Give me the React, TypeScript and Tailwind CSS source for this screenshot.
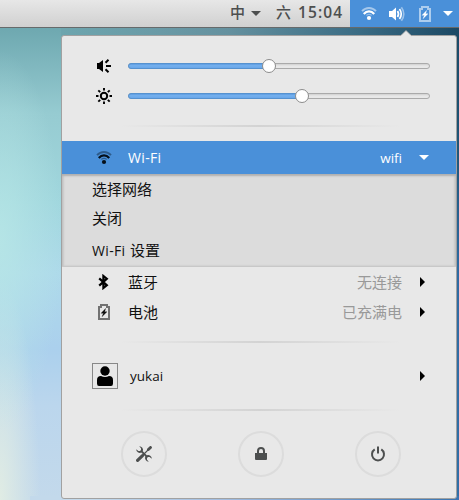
import React from "react";

const CJK = "font-['Open_Sans','Noto_Sans_CJK_SC',sans-serif]";

function WifiIcon({ dim = 0.4 }: { dim?: number }) {
  return (
    <svg width="16" height="16" viewBox="0 0 16 16" fill="none" stroke="currentColor" className="shrink-0">
      <path d="M1 5.2C4.8.9 11.2.9 15 5.2" strokeWidth="1.8" opacity={dim} />
      <path d="M2.8 8C5.8 4.4 10.2 4.4 13.2 8" strokeWidth="2.2" />
      <circle cx="8" cy="12" r="2.1" fill="currentColor" stroke="none" />
      <path d="M5.2 9.4C7 8 9 8 10.8 9.4" strokeWidth="1.2" opacity="0.4" />
    </svg>
  );
}

function BatteryIcon({ dim = 0.55 }: { dim?: number }) {
  return (
    <svg width="16" height="16" viewBox="0 0 16 16" fill="none" className="shrink-0">
      <path d="M3 15V3H5V1H11V3H13V15Z" stroke="currentColor" strokeWidth="2" opacity={dim} />
      <path d="M9.6 4.4L5 9.3H7.4L6 12.7L11 7.8H8.7Z" fill="currentColor" stroke="currentColor" strokeWidth=".3" />
    </svg>
  );
}

function VolumeIcon() {
  return (
    <svg width="16" height="16" viewBox="0 0 16 16" fill="none" stroke="currentColor" className="shrink-0">
      <path d="M0 5H3L7 1.5V14.5L3 11H0Z" fill="currentColor" stroke="none" />
      <path d="M8.5 5Q10.5 8 8.5 11" strokeWidth="1.8" />
      <path d="M10.5 3Q14 8 10.5 13" strokeWidth="1.7" />
      <path d="M12.4 1.2Q17.2 8 12.4 14.8" strokeWidth="1.6" opacity="0.45" />
    </svg>
  );
}

function SpeakerIcon() {
  return (
    <svg width="16" height="16" viewBox="0 0 16 16" className="shrink-0">
      <path d="M1 5H3L7 2V14L3 11H1Z" fill="#000" />
      <path d="M9.5 4.7L12.5 1.8M10 8H15M9.5 11.3L12.5 14.2" stroke="#000" strokeWidth="2" />
    </svg>
  );
}

function SunIcon() {
  return (
    <svg width="16" height="16" viewBox="0 0 16 16" fill="none" stroke="#000" className="shrink-0">
      <circle cx="8" cy="8" r="3.2" strokeWidth="2" />
      <path
        d="M8 0V2.5M8 13.5V16M0 8H2.5M13.5 8H16M2.3 2.3L4.2 4.2M11.8 11.8L13.7 13.7M2.3 13.7L4.2 11.8M11.8 4.2L13.7 2.3"
        strokeWidth="1.9"
      />
    </svg>
  );
}

function BluetoothIcon() {
  return (
    <svg width="16" height="16" viewBox="0 0 16 16" fill="none" stroke="#000" strokeWidth="2.2" className="shrink-0">
      <path d="M3.2 4.4L10.8 11.3L7.4 14V2L10.8 4.7L3.2 11.6" />
    </svg>
  );
}

function UserIcon() {
  return (
    <svg width="20" height="22" viewBox="0 0 20 22" className="shrink-0">
      <circle cx="10" cy="6" r="4.7" fill="#000" />
      <path d="M2 18.5V15Q2 11 6 11Q10 13 14 11Q18 11 18 15V18.5Q18 21 16 21H4Q2 21 2 18.5Z" fill="#000" />
    </svg>
  );
}

function ToolsIcon() {
  return (
    <svg width="16" height="16" viewBox="0 0 16 16" fill="none" stroke="#4d4f4f">
      <path
        d="M3.2.3L5 2.3V4L4 5H2.4L.2 3.2A3.7 3.7 0 0 0 5.3 6.6L9.3 10.6A3.7 3.7 0 0 0 12.8 15.7L11 13.7V12L12 11H13.6L15.8 12.8A3.7 3.7 0 0 0 10.8 9.3L6.8 5.3A3.7 3.7 0 0 0 3.2.3Z"
        fill="#4d4f4f"
        stroke="none"
      />
      <path d="M1.6 14.4L6.5 9.6" strokeWidth="3.2" strokeLinecap="round" />
      <path d="M6.5 9.5L13 3" strokeWidth="1.1" />
      <path d="M12.4 3.5L14.5 1.4" strokeWidth="2.8" strokeLinecap="round" />
    </svg>
  );
}

function LockIcon() {
  return (
    <svg width="16" height="16" viewBox="0 0 16 16" fill="none">
      <path d="M5 8V5A3 3 0 0 1 11 5V8" stroke="#4d4f4f" strokeWidth="2" />
      <path d="M2 7H14V13Q14 14 13 14H3Q2 14 2 13Z" fill="#4d4f4f" />
    </svg>
  );
}

function PowerIcon() {
  return (
    <svg width="16" height="16" viewBox="0 0 16 16" fill="none" stroke="#4d4f4f" strokeWidth="2">
      <path d="M4.7 3.4A6 6 0 1 0 11.3 3.4M8 .5V7.5" />
    </svg>
  );
}

function DownArrow() {
  return (
    <svg width="10" height="5" viewBox="0 0 10 5" className="shrink-0">
      <path d="M0 0H10L5 5Z" fill="currentColor" />
    </svg>
  );
}

function RightArrow() {
  return (
    <svg width="5" height="10" viewBox="0 0 5 10" className="shrink-0">
      <path d="M0 0L5 5L0 10Z" fill="#000" />
    </svg>
  );
}

function Slider({ value }: { value: number }) {
  return (
    <div className="relative ml-4 h-1.5 w-[302px] rounded-full border border-[#aaa] bg-[linear-gradient(#d0d0d0,#e8e8e8_50%)]">
      <div
        className="-ml-px -mt-px h-1.5 rounded-full border border-[#5692cf] bg-[linear-gradient(#5b9be2,#75b0ed_40%,#68a6ea)]"
        style={{ width: value }}
      />
      <div
        className="absolute -top-[5px] size-3.5 rounded-full border border-[#8c8c8c] bg-white"
        style={{ left: value - 8 }}
      />
    </div>
  );
}

function Separator() {
  return (
    <div className="ml-[58px] h-0.5 w-[280px] bg-[linear-gradient(90deg,transparent,#d3d3d3_50%,transparent)]" />
  );
}

function StatusRow({ icon, label, status }: { icon: React.ReactNode; label: string; status: string }) {
  return (
    <div className="flex h-[30px] items-center pl-[34px] pr-[31px]">
      {icon}
      <span className="ml-4 text-[15px] leading-[22px]">{label}</span>
      <span className="ml-auto mr-[18px] text-[15px] leading-[22px] text-[#999]">{status}</span>
      <RightArrow />
    </div>
  );
}

function RoundButton({ children }: { children: React.ReactNode }) {
  return (
    <button className="flex size-[46px] items-center justify-center rounded-full border-2 border-[#dcdcdc]">
      {children}
    </button>
  );
}

export default function App() {
  return (
    <div
      className={
        "relative h-[500px] w-[459px] overflow-hidden text-[#111] bg-[linear-gradient(#1b4864,#1d5272_25%,#2f6ba2_55%,#326fa6)] " + CJK
      }
    >
      <div className="absolute left-0 top-7 h-[472px] w-[62px] bg-[linear-gradient(#6ea8b0,#96cbd1_18%,#a1d7de_37%,#aedaea_52%,#abd0ed_68%,#bbd6ed_80%,#c3d9eb)]" />
      <div className="absolute left-0 top-7 h-[472px] w-[62px] bg-[radial-gradient(ellipse_62px_190px_at_0_45%,#b8e7e6cc,#b8e7e600),radial-gradient(ellipse_40px_220px_at_0_100%,#e0ece4,#e0ece400)]" />
      <div className="absolute left-[61px] top-7 h-3 w-[398px] bg-[linear-gradient(90deg,#6da5ae,#6a9aa6_25%,#65919f_42%,#3c6d85_74%,#1b4864)]" />
      <div className="absolute bottom-0 left-[30px] h-1 w-[429px] bg-[linear-gradient(90deg,#c3d9eb,#c3d9eb_14%,#a1bce0_45%,#3974b0)]" />

      <div className="relative flex h-full flex-col">
        <header className="flex h-7 shrink-0 border-b border-[#666a6b] bg-[linear-gradient(#e7e7e7,#d0d0d0)] text-[#4d4f4f]">
          <div className="ml-auto flex h-[27px] items-center pr-[7px] text-[15px]">
            <span className="-mt-1 font-medium leading-5">中</span>
            <span className="ml-1.5 mr-[15px]"><DownArrow /></span>
            <span className="-mt-1 font-medium leading-5">六</span>
            <span className="-mt-[3px] ml-[7px] w-[45px] whitespace-nowrap text-[15.5px] font-semibold leading-5 tracking-[1.1px]">
              15:04
            </span>
          </div>
          <div className="flex h-[27px] w-[109px] items-center bg-[#4a90d9] pl-[11px] text-white">
            <WifiIcon dim={0.5} />
            <span className="ml-3"><VolumeIcon /></span>
            <span className="ml-3"><BatteryIcon dim={0.55} /></span>
            <span className="ml-[10px]"><DownArrow /></span>
          </div>
        </header>

        <main className="relative ml-[61px] mt-[7px] h-[464px] w-[396px] rounded-[3px] border border-[#a1a1a1] bg-[#e8e8e8]">
          <svg width="12" height="7" viewBox="0 0 12 7" className="absolute -top-[6px] left-[338px]">
            <path d="M0 6.5L6 .5L12 6.5V7H0Z" fill="#e8e8e8" />
            <path d="M0 6L6 .5L12 6" fill="none" stroke="#a1a1a1" strokeWidth=".7" />
          </svg>

          <section className="pt-[15px]">
            <div className="flex h-[30px] items-center pl-[34px]">
              <SpeakerIcon />
              <Slider value={141} />
            </div>
            <div className="flex h-[30px] items-center pl-[34px]">
              <SunIcon />
              <Slider value={174} />
            </div>
          </section>
          <div className="pb-3.5 pt-3.5"><Separator /></div>

          <div className="flex h-[33px] items-center bg-[#4a90d9] pl-[34px] pr-[27px] text-[13.5px] text-white">
            <span className="text-[#06101a]"><WifiIcon dim={0.4} /></span>
            <span className="ml-4 text-sm leading-5 tracking-[0.35px]">Wi-Fi</span>
            <span className="ml-auto mr-[17px] leading-5">wifi</span>
            <DownArrow />
          </div>
          <div className="flex h-[93px] flex-col border-b border-[#c8c8c8] bg-[#dcdcdc] pl-[30px] text-[15px] shadow-[inset_0_2px_2px_#b0b0b0,inset_2px_0_2px_#cacaca,inset_-2px_0_2px_#cacaca]">
            <span className="flex h-[30px] items-center">选择网络</span>
            <span className="flex h-[30px] items-center">关闭</span>
            <span className="flex h-[33px] items-center pt-0.5"><span className="w-[38px] text-sm tracking-[0.35px]">Wi-Fi</span>设置</span>
          </div>

          <StatusRow icon={<BluetoothIcon />} label="蓝牙" status="无连接" />
          <StatusRow icon={<BatteryIcon dim={0.55} />} label="电池" status="已充满电" />
          <div className="pb-[18px] pt-3.5"><Separator /></div>

          <div className="flex h-[30px] items-center pl-[30px] pr-[31px] text-[13.5px]">
            <span className="flex size-[26px] items-center justify-center border border-[#888]">
              <UserIcon />
            </span>
            <span className="ml-3 leading-5">yukai</span>
            <span className="ml-auto"><RightArrow /></span>
          </div>
          <div className="pb-5 pt-[18px]"><Separator /></div>
          <footer className="flex justify-between pl-[59px] pr-[55px]">
            <RoundButton><ToolsIcon /></RoundButton>
            <RoundButton><LockIcon /></RoundButton>
            <RoundButton><PowerIcon /></RoundButton>
          </footer>
        </main>
      </div>
    </div>
  );
}
